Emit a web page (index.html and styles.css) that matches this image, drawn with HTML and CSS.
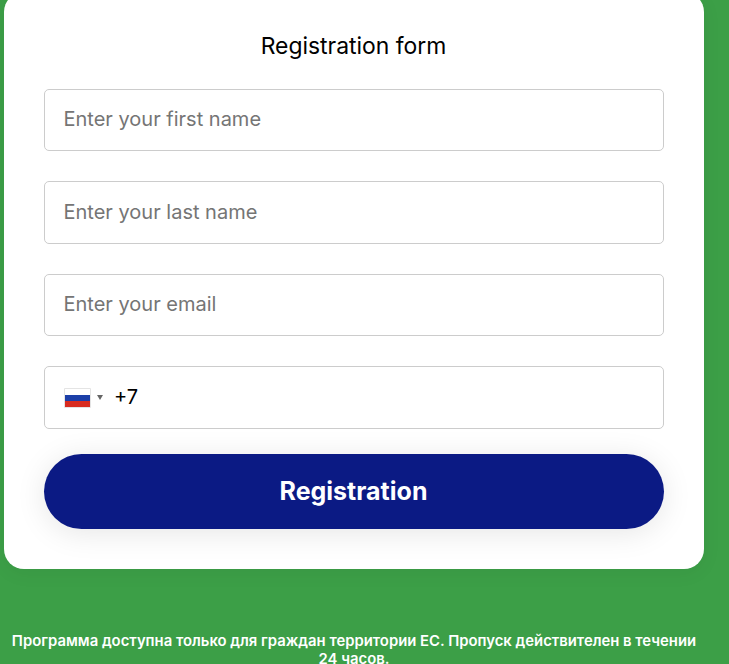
FILE: index.html
```html
<!DOCTYPE html>
<html>
<head>
    <title>Registration form</title>
    <meta name="viewport" content="width=device-width, initial-scale=1">
    <link rel="stylesheet" href="styles.css">
</head>
<body>
    <main class="card">
        <h2 class="card-title">Registration form</h2>
        <form class="form">
            <input class="field" type="text" placeholder="Enter your first name">
            <input class="field" type="text" placeholder="Enter your last name">
            <input class="field" type="email" placeholder="Enter your email">
            <div class="field phone">
                <div class="flag-select">
                    <svg class="flag" viewBox="0 0 27 20" width="27" height="20">
                        <rect width="27" height="20" rx="1" fill="#e4e4e4"/>
                        <rect x="1" y="1" width="25" height="6" fill="#ffffff"/>
                        <rect x="1" y="7" width="25" height="6" fill="#1c3fa8"/>
                        <rect x="1" y="13" width="25" height="6" fill="#d82c20"/>
                    </svg>
                    <span class="arrow"></span>
                </div>
                <input class="phone-input" type="tel" value="+7">
            </div>
            <button class="submit" type="button">Registration</button>
        </form>
    </main>
    <p class="note">Программа доступна только для граждан территории ЕС. Пропуск действителен в течении 24 часов.</p>
</body>
</html>
```

FILE: styles.css
```css
html, body {
    height: 664px;
    overflow: hidden;
}

body {
    background-color: #3c9f47;
    color: #000;
    font-family: Inter, "Liberation Sans", sans-serif;
    margin: 0;
}

.card {
    box-sizing: border-box;
    width: 700px;
    height: 577px;
    margin: -8px 0 0 4px;
    padding: 39px 40px 40px;
    background-color: #fff;
    border-radius: 20px;
    box-shadow: 0 4px 20px rgba(0, 0, 0, 0.05);
}

.card-title {
    margin: 0 0 27.75px;
    padding-right: 1px;
    font-size: 22.9px;
    font-weight: 400;
    line-height: 30px;
    text-align: center;
}

.form {
    display: flex;
    flex-direction: column;
    gap: 30px;
}

.field {
    box-sizing: border-box;
    width: 100%;
    height: 62.5px;
    padding: 0 18.5px 2px;
    background-color: #fff;
    border: 1px solid #ccc;
    border-radius: 5px;
    font-family: inherit;
    font-size: 20px;
    outline: none;
}

.field::placeholder {
    color: #757575;
}

.phone {
    display: flex;
    align-items: center;
    padding: 0 19px;
}

.flag-select {
    display: flex;
    align-items: center;
    gap: 6px;
    margin-right: 11px;
}

.flag {
    display: block;
}

.arrow {
    width: 0;
    height: 0;
    border-left: 3px solid transparent;
    border-right: 3px solid transparent;
    border-top: 5px solid #666;
}

.phone-input {
    flex: 1;
    min-width: 0;
    padding: 0 0 2px;
    border: 0;
    outline: none;
    font-family: inherit;
    font-size: 20px;
    color: #000;
}

.submit {
    height: 75px;
    margin-top: -5px;
    padding: 0 1px 0 0;
    background-color: #0b1a84;
    border: 0;
    border-radius: 37.5px;
    box-shadow: 0 4px 30px rgba(0, 0, 0, 0.1);
    color: #fff;
    font-family: inherit;
    font-size: 25px;
    font-weight: 700;
}

.note {
    width: 700px;
    margin: 63px 0 0 4px;
    color: #fff;
    font-size: 14.85px;
    font-weight: 600;
    line-height: 18px;
    text-align: center;
}
```
